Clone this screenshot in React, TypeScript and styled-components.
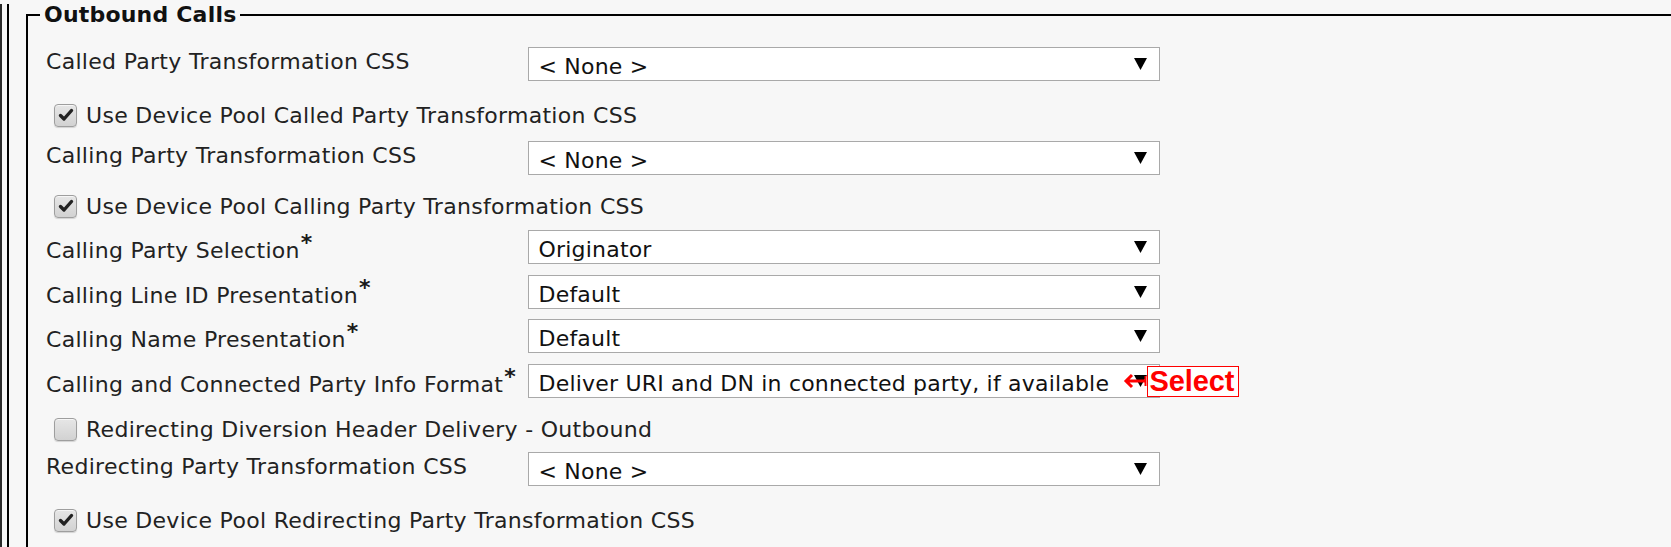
import React from "react";
import styled, { createGlobalStyle } from "styled-components";

const Global = createGlobalStyle`
  html, body {
    margin: 0;
    padding: 0;
    background: #f7f7f7;
    overflow: hidden;
  }
  body {
    font-family: "DejaVu Sans", Verdana, sans-serif;
    color: #222;
  }
`;

const Page = styled.div`
  height: 547px;
  border-left: 2px solid #2b2b2b;
  padding-left: 5px;
  box-sizing: border-box;
`;

const Inner = styled.div`
  height: 100%;
  border-left: 2px solid #000;
  padding-left: 17px;
`;

const Fieldset = styled.fieldset`
  margin: 4px 0 0 0;
  padding: 0 0 0 12px;
  border: none;
  border-top: 2px solid #000;
  border-left: 2px solid #000;
  min-width: 0;
  height: 560px;
`;

const Legend = styled.legend`
  padding: 0 4px;
  font-weight: bold;
  font-size: 22px;
  line-height: 22px;
  color: #111;
  letter-spacing: 0.2px;
`;

const Body = styled.div`
  display: flex;
  flex-direction: column;
  padding-left: 6px;
`;

const SelectRow = styled.div<{ $mt: number }>`
  display: grid;
  grid-template-columns: 481.5px 632px;
  align-items: start;
  margin-top: ${(p) => p.$mt}px;
`;

const Label = styled.div`
  font-size: 22px;
  line-height: 26px;
  padding-top: 2px;
  letter-spacing: 0.3px;
  white-space: nowrap;
`;

const Req = styled.span`
  display: inline-block;
  font-size: 22px;
  font-weight: bold;
  line-height: 1;
  vertical-align: 8px;
  margin-left: 1px;
  color: #1a1a1a;
`;

const SelectBox = styled.div`
  position: relative;
  height: 34px;
  box-sizing: border-box;
  border: 1px solid #a9a9a9;
  background: #fff;
  display: flex;
  align-items: center;
  padding: 0 12px 0 10px;
  font-size: 22px;
  line-height: 26px;
  color: #111;
`;

const SelectText = styled.span`
  flex: 1;
  white-space: nowrap;
  overflow: hidden;
  padding-top: 6px;
  letter-spacing: 0.2px;
`;

const Caret = styled.svg`
  width: 13px;
  height: 12px;
  flex: none;
`;

const Annotation = styled.div`
  position: absolute;
  left: 594px;
  top: 1px;
  display: flex;
  align-items: center;
`;

const AnnoArrow = styled.svg`
  width: 24px;
  height: 20px;
  display: block;
`;

const AnnoBox = styled.div`
  border: 1px solid #f00;
  background: #fff;
  color: #f00;
  font-family: "Liberation Sans", Arial, sans-serif;
  font-weight: bold;
  font-size: 29px;
  line-height: 29px;
  height: 31px;
  box-sizing: border-box;
  padding: 0 4px 0 2px;
  letter-spacing: -0.1px;
`;

const CheckRow = styled.label<{ $mt: number }>`
  display: flex;
  align-items: center;
  gap: 9px;
  height: 24px;
  margin-top: ${(p) => p.$mt}px;
  padding-left: 8px;
  font-size: 22px;
  line-height: 26px;
  letter-spacing: 0.3px;
  white-space: nowrap;
`;

const Box = styled.span`
  width: 23px;
  height: 23px;
  box-sizing: border-box;
  border: 1px solid #9e9e9e;
  border-radius: 4px;
  background: linear-gradient(to bottom, #e6e6e6, #d2d2d2);
  box-shadow: inset 0 1px 0 #f6f6f6, 0 1px 1px rgba(0, 0, 0, 0.15);
  display: flex;
  align-items: center;
  justify-content: center;
  flex: none;
`;

const CheckText = styled.span`
  padding-top: 2px;
`;

type Item =
  | { kind: "select"; label: string; value: string; req?: boolean; mt: number; note?: boolean }
  | { kind: "check"; label: string; checked: boolean; mt: number };

const items: Item[] = [
  { kind: "select", label: "Called Party Transformation CSS", value: "< None >", mt: 21 },
  { kind: "check", label: "Use Device Pool Called Party Transformation CSS", checked: true, mt: 22 },
  { kind: "select", label: "Calling Party Transformation CSS", value: "< None >", mt: 14 },
  { kind: "check", label: "Use Device Pool Calling Party Transformation CSS", checked: true, mt: 19 },
  { kind: "select", label: "Calling Party Selection", value: "Originator", req: true, mt: 12 },
  { kind: "select", label: "Calling Line ID Presentation", value: "Default", req: true, mt: 10.5 },
  { kind: "select", label: "Calling Name Presentation", value: "Default", req: true, mt: 10.5 },
  {
    kind: "select",
    label: "Calling and Connected Party Info Format",
    value: "Deliver URI and DN in connected party, if available",
    req: true,
    mt: 10.5,
    note: true,
  },
  { kind: "check", label: "Redirecting Diversion Header Delivery - Outbound", checked: false, mt: 19.5 },
  { kind: "select", label: "Redirecting Party Transformation CSS", value: "< None >", mt: 11 },
  { kind: "check", label: "Use Device Pool Redirecting Party Transformation CSS", checked: true, mt: 22 },
];

function Checkbox({ checked }: { checked: boolean }) {
  return (
    <Box>
      {checked && (
        <svg width="16" height="14" viewBox="0 0 16 14">
          <path
            d="M2.5 7.5 L6 11 L13.5 2.5"
            fill="none"
            stroke="#222"
            strokeWidth="3.4"
            strokeLinecap="round"
            strokeLinejoin="round"
          />
        </svg>
      )}
    </Box>
  );
}

export default function App() {
  return (
    <>
      <Global />
      <Page>
        <Inner>
          <Fieldset>
            <Legend>Outbound Calls</Legend>
            <Body>
              {items.map((it, i) =>
                it.kind === "select" ? (
                  <SelectRow key={i} $mt={it.mt}>
                    <Label>
                      {it.label}
                      {it.req && <Req>*</Req>}
                    </Label>
                    <SelectBox>
                      <SelectText>{it.value}</SelectText>
                      <Caret viewBox="0 0 13 12">
                        <polygon points="0,0 13,0 6.5,12" fill="#000" />
                      </Caret>
                      {it.note && (
                        <Annotation>
                          <AnnoArrow viewBox="0 0 24 20">
                            <path
                              d="M3 10 H23 M9 4 L3 10 L9 16"
                              fill="none"
                              stroke="#f00"
                              strokeWidth="3"
                              strokeLinecap="butt"
                              strokeLinejoin="miter"
                            />
                            <path d="M22.5 5 V15" stroke="#f00" strokeWidth="2" />
                          </AnnoArrow>
                          <AnnoBox>Select</AnnoBox>
                        </Annotation>
                      )}
                    </SelectBox>
                  </SelectRow>
                ) : (
                  <CheckRow key={i} $mt={it.mt}>
                    <Checkbox checked={it.checked} />
                    <CheckText>{it.label}</CheckText>
                  </CheckRow>
                )
              )}
            </Body>
          </Fieldset>
        </Inner>
      </Page>
    </>
  );
}
